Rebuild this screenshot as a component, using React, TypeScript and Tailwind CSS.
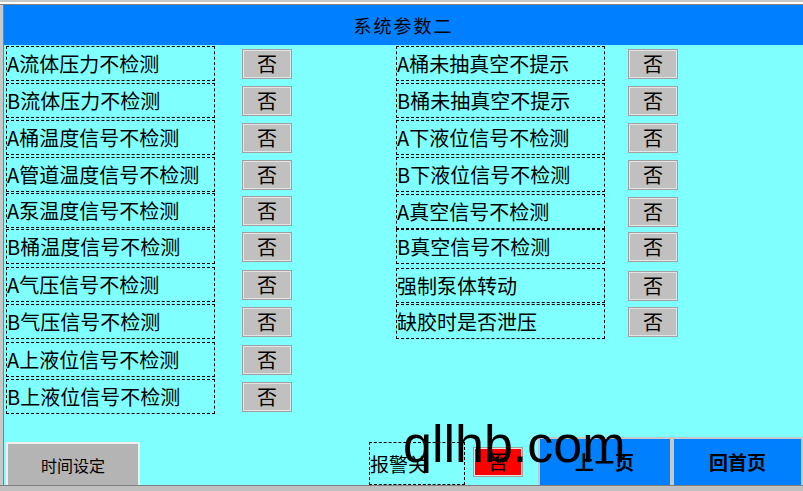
import React from "react";

const leftRows = [
  { label: "A流体压力不检测", mt: "mt-[1px]" },
  { label: "B流体压力不检测", mt: "mt-[2px]" },
  { label: "A桶温度信号不检测", mt: "mt-[2px]" },
  { label: "A管道温度信号不检测", mt: "mt-[2px]" },
  { label: "A泵温度信号不检测", mt: "mt-[1px]" },
  { label: "B桶温度信号不检测", mt: "mt-[1px]" },
  { label: "A气压信号不检测", mt: "mt-[3px]" },
  { label: "B气压信号不检测", mt: "mt-[2px]" },
  { label: "A上液位信号不检测", mt: "mt-[3px]" },
  { label: "B上液位信号不检测", mt: "mt-[2px]" },
];

const rightRows = [
  { label: "A桶未抽真空不提示", mt: "mt-[1px]" },
  { label: "B桶未抽真空不提示", mt: "mt-[2px]" },
  { label: "A下液位信号不检测", mt: "mt-[2px]" },
  { label: "B下液位信号不检测", mt: "mt-[2px]" },
  { label: "A真空信号不检测", mt: "mt-[2px]" },
  { label: "B真空信号不检测", mt: "mt-0" },
  { label: "强制泵体转动", mt: "mt-[4px]" },
  { label: "缺胶时是否泄压", mt: "mt-[1px]" },
];

const font = { fontFamily: '"Noto Sans CJK SC", "Noto Sans", sans-serif' };

function NoButton({ red = false }: { red?: boolean }) {
  return (
    <div
      className={`flex h-[30px] w-[50px] items-center justify-center border border-[#a0a0a0] text-[20px] leading-none text-black shadow-[inset_1px_1px_0_#e4e4e4,inset_-1px_-1px_0_#e4e4e4] ${
        red ? "bg-[#ff0000]" : "bg-[#c0c0c0]"
      }`}
    >
      否
    </div>
  );
}

function Row({ label, mt, gap }: { label: string; mt: string; gap: string }) {
  return (
    <div className={`flex items-center ${mt} ${gap}`}>
      <div className="flex h-[35px] w-[209px] items-center border border-dashed border-black text-[20px] leading-none text-black whitespace-nowrap">
        {label}
      </div>
      <NoButton />
    </div>
  );
}

export default function App() {
  return (
    <div className="relative flex h-[491px] w-[803px] flex-col overflow-hidden bg-[#c0c0c0]" style={font}>
      {/* window frame top */}
      <div className="h-[2px] bg-[#c8c8c8]" />
      <div className="h-[2px] bg-white" />
      <div className="h-[1px] bg-[#808080]" />

      <div className="flex flex-1">
        <div className="w-[3px] bg-[#c8c8c8]" />
        <div className="w-[1px] bg-[#808080]" />

        <div className="flex flex-1 flex-col">
          {/* header */}
          <div className="flex h-[40px] items-center justify-center bg-[#0080ff] text-[18px] tracking-[2px] text-black">
            系统参数二
          </div>

          {/* content */}
          <div className="flex flex-1 flex-col bg-[#80ffff]">
            <div className="flex pl-[2px]">
              <div className="flex flex-col">
                {leftRows.map((r) => (
                  <Row key={r.label} label={r.label} mt={r.mt} gap="gap-[27px]" />
                ))}
              </div>
              <div className="ml-[104px] flex flex-col">
                {rightRows.map((r) => (
                  <Row key={r.label} label={r.label} mt={r.mt} gap="gap-[23px]" />
                ))}
              </div>
            </div>

            <div className="flex-1" />

            {/* bottom controls */}
            <div className="flex h-[48px] items-end pl-[2px]">
              <div className="flex h-[43px] w-[134px] items-center justify-center border-2 border-b-0 border-[#f0f0f0] bg-[#b4b4b4] text-[16px] text-black">
                时间设定
              </div>
              <div className="ml-[229px] flex h-[43px] w-[96px] items-center border border-dashed border-black text-[19px] leading-none text-black">
                报警关
              </div>
              <div className="mb-[8px] ml-[8px]">
                <NoButton red />
              </div>
              <div className="ml-[15px] flex h-[48px] w-[134px] items-center justify-center border-2 border-b-0 border-[#c8c8c8] bg-[#0080ff] text-[19px] font-bold tracking-[1px] text-black">
                上一页
              </div>
              <div className="flex h-[48px] flex-1 items-center justify-center border-2 border-b-0 border-[#c8c8c8] bg-[#0080ff] text-[19px] font-bold text-black">
                回首页
              </div>
            </div>
          </div>
        </div>
      </div>

      {/* window frame bottom */}
      <div className="h-[1px] bg-[#808080]" />
      <div className="h-[5px] bg-[#c0c0c0]" />

      {/* watermark */}
      <div
        className="pointer-events-none absolute left-[403px] top-[418px] text-[52px] leading-none text-black"
        style={{ fontFamily: '"Liberation Sans", Arial, sans-serif' }}
      >
        qllhb.com
      </div>
    </div>
  );
}
